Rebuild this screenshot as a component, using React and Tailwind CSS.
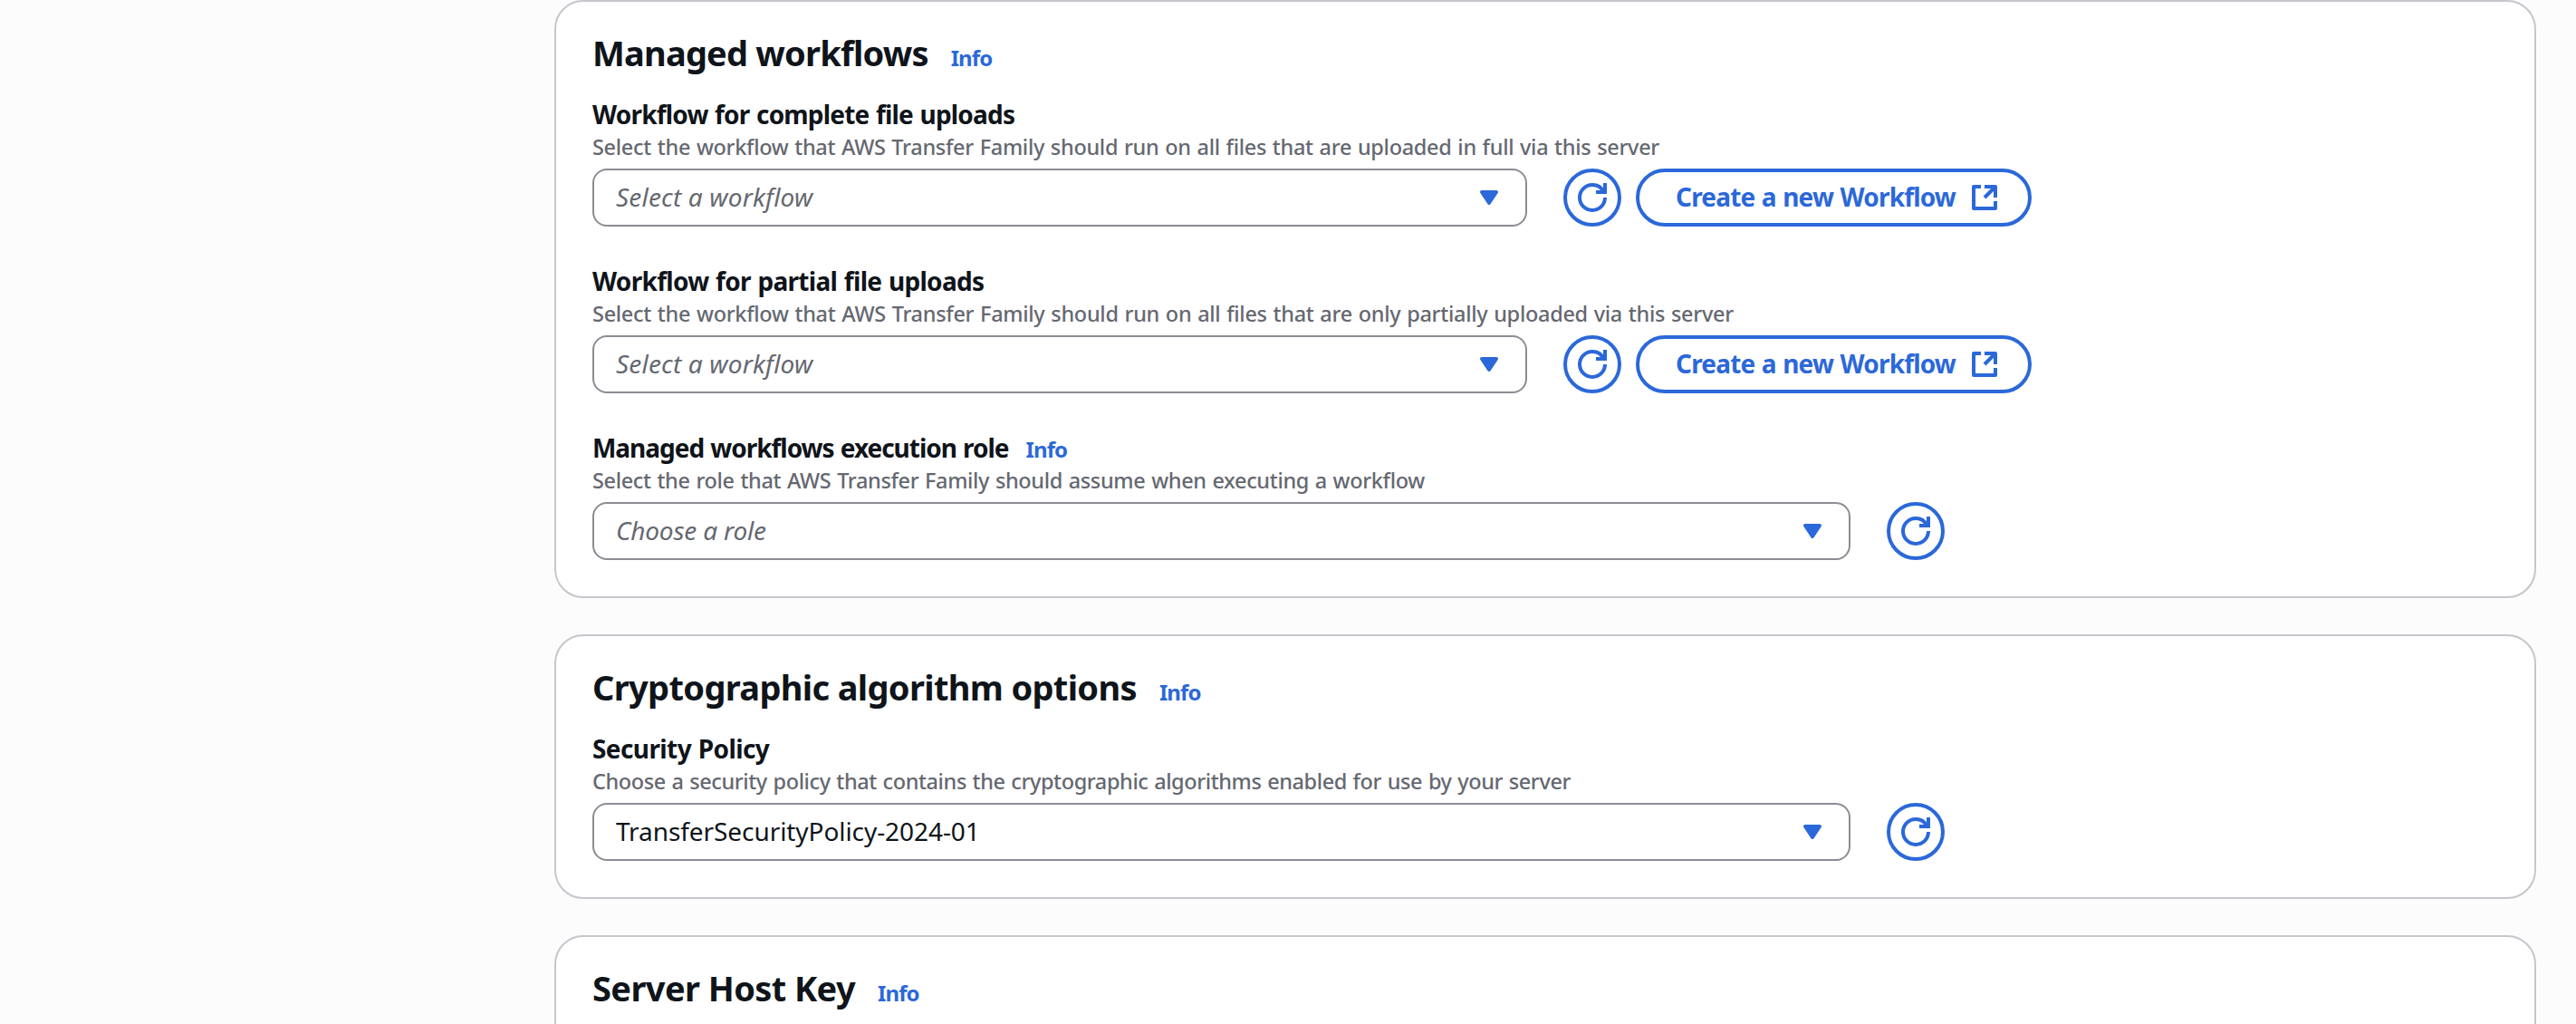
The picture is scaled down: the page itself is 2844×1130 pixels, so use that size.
function RefreshButton() {
  return (
    <button
      type="button"
      aria-label="Refresh"
      className="flex size-16 shrink-0 items-center justify-center rounded-full border-4 border-[#2b68d9] bg-white text-[#2b68d9]"
    >
      <svg viewBox="0 0 16 16" className="size-8" fill="none" stroke="currentColor" strokeWidth="2">
        <path d="M10 5h5V0" />
        <path d="M15 8a6.957 6.957 0 0 1-7 7 6.957 6.957 0 0 1-7-7 6.957 6.957 0 0 1 7-7 6.87 6.87 0 0 1 6.3 4" />
      </svg>
    </button>
  );
}

function CreateButton() {
  return (
    <button
      type="button"
      className="flex h-16 w-[437px] shrink-0 items-center justify-between rounded-full border-4 border-[#2b68d9] bg-white pr-8 pl-10 text-[28px] font-bold whitespace-nowrap text-[#2b68d9]"
    >
      <span className="pb-0.5 tracking-[-0.82px] [word-spacing:1px]">Create a new Workflow</span>
      <svg viewBox="0 0 16 16" className="size-8" fill="none" stroke="currentColor" strokeWidth="2">
        <path d="M8 2h6v6" strokeLinejoin="round" />
        <path d="m8 8 6-6" />
        <path d="M14 10v4H2V2h4" strokeLinejoin="round" />
      </svg>
    </button>
  );
}

function Select({ text, width, style }) {
  return (
    <div
      className={`flex h-16 shrink-0 items-center justify-between rounded-2xl border-2 border-[#8c8c94] bg-white pr-6 pl-6 text-[28px] leading-[38px] whitespace-nowrap ${width}`}
    >
      <span className={`pb-0.5 ${style}`}>{text}</span>
      <svg viewBox="0 0 16 16" className="size-8 text-[#2b68d9]">
        <path d="M4 5h8l-4 6-4-6z" fill="currentColor" stroke="currentColor" strokeWidth="2" strokeLinejoin="round" />
      </svg>
    </div>
  );
}

function Info({ className }) {
  return (
    <a className={`text-2xl font-bold tracking-[-0.9px] text-[#2b68d9] ${className}`}>Info</a>
  );
}

function Field({ label, tracking, info, hint, hintTracking, children }) {
  return (
    <div className="flex flex-col whitespace-nowrap">
      <div className="flex h-[38px] items-baseline text-[28px] leading-[40px] font-bold">
        <span className={tracking}>{label}</span>
        {info && <Info className="ml-[19px] leading-[38px]" />}
      </div>
      <p
        className={`mt-0.5 h-8 text-[23.5px] leading-8 font-medium text-[#656871] [word-spacing:1px] ${hintTracking}`}
      >
        {hint}
      </p>
      <div className="mt-2 flex gap-10">{children}</div>
    </div>
  );
}

function Card({ title, tracking, className, children }) {
  return (
    <section
      className={`flex shrink-0 flex-col gap-6 rounded-[32px] border-2 border-[#c6c6cd] bg-white px-10 pt-8 ${className}`}
    >
      <div className="flex h-12 items-baseline whitespace-nowrap">
        <h2 className={`text-[38px] leading-[48px] font-bold ${tracking}`}>{title}</h2>
        <Info className="ml-[25px] leading-[48px]" />
      </div>
      {children}
    </section>
  );
}

const placeholder = "italic text-[#656871]";

export default function App() {
  return (
    <main className="flex h-[1130px] w-[2844px] flex-col gap-10 overflow-hidden bg-[#fcfcfd] pr-11 pl-[612px] font-['Noto_Sans',sans-serif] text-[#0f141a]">
      <Card title="Managed workflows" tracking="tracking-[-0.79px]" className="h-[660px]">
        <div className="flex flex-col gap-10">
          <Field
            label="Workflow for complete file uploads"
            tracking="tracking-[-0.8px] [word-spacing:1px]"
            hint="Select the workflow that AWS Transfer Family should run on all files that are uploaded in full via this server"
            hintTracking="tracking-[-0.305px]"
          >
            <Select text="Select a workflow" width="w-[1032px]" style={`${placeholder} tracking-[0.18px]`} />
            <div className="flex gap-4">
              <RefreshButton />
              <CreateButton />
            </div>
          </Field>
          <Field
            label="Workflow for partial file uploads"
            tracking="tracking-[-0.69px] [word-spacing:1px]"
            hint="Select the workflow that AWS Transfer Family should run on all files that are only partially uploaded via this server"
            hintTracking="tracking-[-0.295px]"
          >
            <Select text="Select a workflow" width="w-[1032px]" style={`${placeholder} tracking-[0.18px]`} />
            <div className="flex gap-4">
              <RefreshButton />
              <CreateButton />
            </div>
          </Field>
          <Field
            label="Managed workflows execution role"
            tracking="tracking-[-1.03px] [word-spacing:1px]"
            info
            hint="Select the role that AWS Transfer Family should assume when executing a workflow"
            hintTracking="tracking-[-0.35px]"
          >
            <Select text="Choose a role" width="w-[1389px]" style={`${placeholder} tracking-[-0.18px]`} />
            <RefreshButton />
          </Field>
        </div>
      </Card>

      <Card title="Cryptographic algorithm options" tracking="tracking-[-0.66px]" className="h-[292px]">
        <Field
          label="Security Policy"
          tracking="tracking-[-0.6px] [word-spacing:1px]"
          hint="Choose a security policy that contains the cryptographic algorithms enabled for use by your server"
          hintTracking="tracking-[-0.41px]"
        >
          <Select text="TransferSecurityPolicy-2024-01" width="w-[1389px]" style="tracking-[-0.07px]" />
          <RefreshButton />
        </Field>
      </Card>

      <Card title="Server Host Key" tracking="tracking-[-0.6px]" className="h-[292px]" />
    </main>
  );
}
